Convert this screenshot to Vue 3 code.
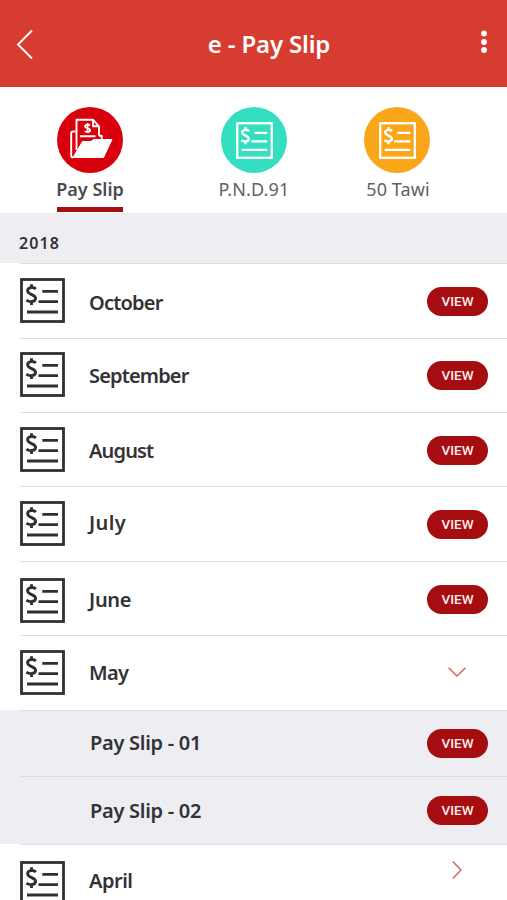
<script setup>
const tabs = [
  { label: 'Pay Slip', kind: 'folder', active: true },
  { label: 'P.N.D.91', kind: 'mint' },
  { label: '50 Tawi', kind: 'amber' },
]

// height: row height; icon / text / action: distance from the top of the row
const rows = [
  { label: 'October', height: 75, icon: 15, text: 30, action: 24, spacing: -0.8 },
  { label: 'September', height: 74, icon: 14, text: 28, action: 23, spacing: -0.85 },
  { label: 'August', height: 74, icon: 15, text: 29, action: 24, spacing: -0.85 },
  { label: 'July', height: 75, icon: 15, text: 27, action: 24, spacing: 0.4 },
  { label: 'June', height: 74, icon: 17, text: 29, action: 24, spacing: -0.3 },
  { label: 'May', height: 75, icon: 15, text: 28, action: 32, spacing: -0.6, toggle: 'down' },
  { label: 'Pay Slip - 01', height: 66, text: 23, action: 19, spacing: -0.27, sub: true },
  { label: 'Pay Slip - 02', height: 68, text: 25, action: 20, spacing: -0.27, sub: true },
  { label: 'April', height: 75, icon: 17, text: 27, action: 17, spacing: -0.5, toggle: 'right' },
]
</script>

<template>
  <div class="screen">
    <header class="bar">
      <svg class="back" viewBox="0 0 18 30"><path d="M16 1.500 2 15.500l14 14" /></svg>
      <h1 class="title">e - Pay Slip</h1>
      <svg class="more" viewBox="0 0 6 24">
        <circle cx="3" cy="4.500" r="2.900" /><circle cx="3" cy="13" r="2.900" /><circle cx="3" cy="21" r="2.900" />
      </svg>
    </header>

    <nav class="tabs">
      <div v-for="t in tabs" :key="t.label" class="tab" :class="[t.kind, { active: t.active }]">
        <div class="disc">
          <svg v-if="t.kind === 'folder'" class="art" viewBox="0 0 66 66">
            <path class="line" d="M18.500 24.500h-2.500q-1.800 0-1.800 1.800v22.200q0 2 1.800 2" />
            <path class="line" d="M19.500 43V12.800H36l6 6.500v9.500M36 12.800v6.500h6M23 29.300h15.500M42 28.800h2.700v3" />
            <path class="line coin" d="M33 18.500c-1.200-1.100-5-1.100-5 .9 0 2.200 5.200 1.500 5.200 3.900 0 2.100-4 2.200-5.400.9M30.600 16v9.800" />
            <path class="fill" d="M25.500 34.500H34l2.500-2H55L46.500 50.500H16z" />
          </svg>
          <svg v-else class="slip" viewBox="0 0 45 45">
            <rect x="1.500" y="1.500" width="42" height="42" />
            <path d="M22.300 13.300H38M18.500 23.600H38M7 34h31" />
            <path class="dollar" d="M15.900 11.100C13.700 8.700 7.600 8.900 7.600 12.700c0 4.200 8 3.500 8 7.600 0 3.900-6.300 4.100-9.200 1.800M11.500 6.200v3M11.500 23.200v3.900" />
          </svg>
        </div>
        <span class="tab-label">{{ t.label }}</span>
      </div>
    </nav>

    <h2 class="year">2018</h2>

    <ul class="list">
      <li v-for="r in rows" :key="r.label" class="row" :class="{ sub: r.sub }" :style="{ height: r.height + 'px' }">
        <div class="lead">
          <svg v-if="!r.sub" class="slip" viewBox="0 0 45 45" :style="{ marginTop: r.icon + 'px' }">
            <rect x="1.500" y="1.500" width="42" height="42" />
            <path d="M22.300 13.300H38M18.500 23.600H38M7 34h31" />
            <path class="dollar" d="M15.900 11.100C13.700 8.700 7.600 8.900 7.600 12.700c0 4.200 8 3.500 8 7.600 0 3.900-6.300 4.100-9.200 1.800M11.500 6.200v3M11.500 23.200v3.900" />
          </svg>
        </div>
        <span class="name" :style="{ marginTop: r.text + 'px', letterSpacing: r.spacing + 'px' }">{{ r.label }}</span>
        <div class="action" :style="{ marginTop: r.action + 'px' }">
          <svg v-if="r.toggle === 'down'" class="chevron down" viewBox="0 0 18 10"><path d="M.6.8 9 9 17.400.8" /></svg>
          <svg v-else-if="r.toggle === 'right'" class="chevron right" viewBox="0 0 10 18"><path d="M.8.6 9 9 .8 17.400" /></svg>
          <button v-else class="view">VIEW</button>
        </div>
      </li>
    </ul>
  </div>
</template>

<style>
body { margin: 0; background: #fff; overflow: hidden; }
</style>

<style scoped>
.screen {
  width: 507px;
  height: 900px;
  overflow: hidden;
  background: #fff;
  color: #333236;
  font-family: "Noto Sans", sans-serif;
}
.bar {
  box-sizing: border-box;
  height: 87px;
  padding: 29px 20px 0 16px;
  display: grid;
  grid-template-columns: 18px 1fr 6px;
  background: #d73c31;
}
.back { width: 18px; height: 30px; fill: none; stroke: #fff; stroke-width: 1.900; }
.more { width: 6px; height: 24px; fill: #fff; }
.title {
  margin: 0 0 0 23px;
  text-align: center;
  color: #fff;
  font-size: 24px;
  font-weight: 600;
  line-height: 30px;
  letter-spacing: -0.150px;
}
.tabs {
  box-sizing: border-box;
  height: 126px;
  padding: 20px 0 0 46px;
  display: flex;
}
.tab { width: 88px; display: flex; flex-direction: column; align-items: center; }
.tab.mint { margin-left: 76px; }
.tab.amber { margin-left: 55px; }
.disc { width: 66px; height: 66px; border-radius: 50%; display: flex; align-items: center; justify-content: center; }
.folder .disc { background: #d9000d; }
.mint .disc { background: #33dfc0; }
.amber .disc { background: #faa61a; }
.slip { width: 45px; height: 45px; display: block; fill: none; stroke: #302f33; stroke-width: 2.800; }
.slip .dollar { stroke-width: 2.900; }
.disc .slip { width: 37px; height: 37px; stroke: #fff; }
.art { width: 66px; height: 66px; }
.line { fill: none; stroke: #fff; stroke-width: 1.900; stroke-linejoin: round; }
.coin { stroke-width: 1.800; }
.fill { fill: #fff; stroke: #fff; stroke-linejoin: round; }
.tab-label {
  margin-top: 3px;
  color: #626165;
  font-size: 18px;
  line-height: 26px;
  white-space: nowrap;
}
.amber .tab-label { margin-left: 2px; letter-spacing: 0.100px; }
.mint .tab-label { letter-spacing: 0.150px; }
.active .tab-label {
  box-sizing: border-box;
  width: 66px;
  height: 36px;
  display: flex;
  justify-content: center;
  border-bottom: 5px solid #a50d10;
  color: #4b4a4e;
  font-weight: 600;
}
.year {
  box-sizing: border-box;
  height: 50px;
  margin: 0;
  padding: 19px 0 0 19px;
  background: #eeedf2;
  font-size: 16px;
  font-weight: 600;
  line-height: 22px;
  letter-spacing: 1.100px;
}
.list { margin: 0; padding: 0; list-style: none; }
.row {
  box-sizing: border-box;
  display: grid;
  grid-template-columns: 69px 1fr 61px;
  align-items: start;
  padding: 0 19px 0 20px;
  background: linear-gradient(#dddce0, #dddce0) 20px 0 / 100% 1px no-repeat #fff;
}
.row.sub { background-color: #eeedf2; padding-left: 21px; }
.name { font-size: 20px; font-weight: 600; line-height: 20px; white-space: nowrap; }
.action { display: flex; justify-content: center; }
.view {
  width: 61px;
  height: 29px;
  padding: 0;
  border: 0;
  border-radius: 15px;
  background: #a50d10;
  color: #fbeeec;
  font: 500 13.500px/29px Roboto, sans-serif;
}
.chevron { fill: none; stroke: #de5c54; stroke-width: 1.400; }
.down { width: 18px; height: 10px; margin-right: 1px; }
.right { width: 10px; height: 18px; margin-right: 2px; }
</style>
